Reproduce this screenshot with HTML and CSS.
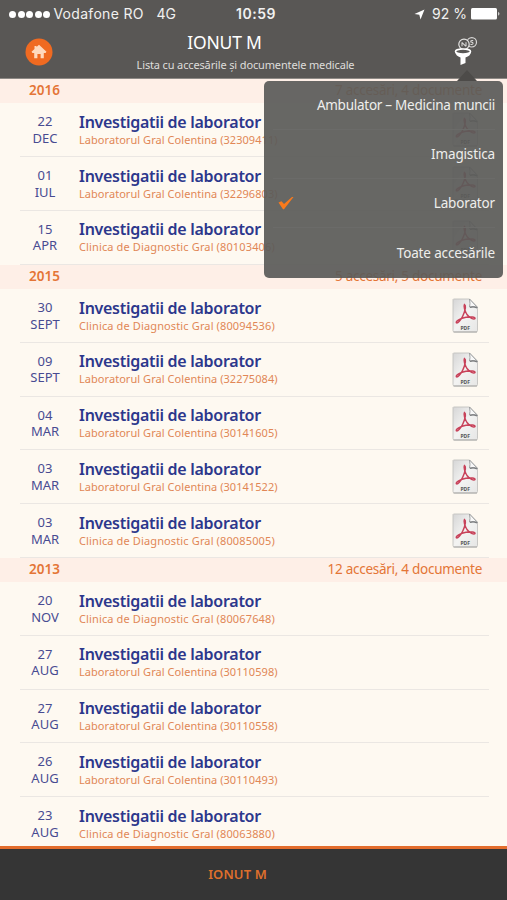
FILE: index.html
```html
<!DOCTYPE html>
<html lang="ro">
<head>
<meta charset="utf-8">
<title>IONUT M</title>
<link rel="stylesheet" href="styles.css">
</head>
<body>
<svg width="0" height="0" class="defs">
  <defs>
    <linearGradient id="paper" x1="0" y1="0" x2="1" y2="1"><stop offset="0" stop-color="#d6d6d6"/><stop offset=".5" stop-color="#f3f3f2"/><stop offset="1" stop-color="#e6e6e5"/></linearGradient>
    <symbol id="pdf" viewBox="0 0 27 35">
      <path d="M1.5 1H17.500L25.500 9V32.500Q25.500 34 24 34H2.500Q1 34 1 32.500V1.500Z" fill="url(#paper)" stroke="#c3c2c0" stroke-width=".9"/>
      <path d="M1.500 34H25" stroke="#aaa9a7" stroke-width="1"/>
      <path d="M17.500 1Q18.500 6 17.500 9Q22 8 25.500 9.500Z" fill="#f8f8f8" stroke="#96989a" stroke-width=".9"/>
      <path d="M18 9.300Q22 8.200 25 10" fill="none" stroke="#77797b" stroke-width="1.300"/>
      <path d="M12.500 6.500C14.600 8 12.800 13.500 10.800 18C9 22 5.500 25.800 4.400 24.800C3.600 23.500 8 20.300 14 19.300C19 18.500 23.500 19.200 23 20.500C22 21.800 17.500 20 15.200 16.800C13 13.500 11.300 8.500 12.500 6.500Z" fill="none" stroke="#c8425a" stroke-width="1.500"/>
      <text x="13.200" y="31.800" text-anchor="middle" class="pdf-label">PDF</text>
    </symbol>
  </defs>
</svg>
<div class="screen">
  <header class="top">
    <div class="status">
      <div class="carrier"><span class="dots"><i></i><i></i><i></i><i></i><i></i></span><span class="net">Vodafone RO</span><span class="gen">4G</span></div>
      <div class="time">10:59</div>
      <div class="power">
        <svg width="11" height="11" viewBox="0 0 11 11"><path d="M10.500 .5L6.500 10.500L5.300 5.700L.5 5Z" fill="#fff"/></svg>
        <span class="percent">92 %</span>
        <svg width="30" height="12" viewBox="0 0 30 12"><rect width="26" height="11.500" rx="1.500" fill="#fff"/><path d="M27.300 3.800Q29.500 5.800 27.300 7.800Z" fill="#fff"/></svg>
      </div>
    </div>
    <div class="nav">
      <svg class="home" width="28" height="28" viewBox="0 0 28 28"><circle cx="14" cy="14" r="13.500" fill="#f06a21"/><path d="M14 6.700L21.500 13.700L20.500 15H18.800V20.300H15.600V16H12.400V20.300H9.200V15H7.500L6.500 13.700L9.500 10.900V8H11.500V9Z" fill="#ffd9bd"/></svg>
      <div class="heading"><h1>IONUT M</h1><p>Lista cu accesările și documentele medicale</p></div>
      <svg class="funnel" width="26" height="31" viewBox="0 0 26 31"><circle cx="18.800" cy="6.300" r="4.700" fill="#595755" stroke="#d8d7d6" stroke-width="1.200"/><path d="M20.200 4.500Q17.200 4.100 17.900 6Q20.700 6.500 19.800 8Q18.900 9 17.500 8.200" fill="none" stroke="#d8d7d6" stroke-width="1.100"/><circle cx="11" cy="8.300" r="5.200" fill="#595755" stroke="#e5e4e3" stroke-width="1.200"/><path d="M8.800 6.400L13 10.300M13 6.300V10.300M9 6.300V10.300" stroke="#d8d7d6" stroke-width="1.100"/><ellipse cx="10" cy="15.500" rx="7.500" ry="2.500" fill="#595755" stroke="#fff" stroke-width="1.600"/><path d="M2 16Q10 20 18 16Q17.500 20 12.500 21.500V27L7.500 29V21.500Q3 20 2 16Z" fill="#fff"/></svg>
    </div>
  </header>
  <main class="list">
    <div class="year"><b>2016</b><span>7 accesări, 4 documente</span></div>
    <article class="visit"><div class="date">22<br>DEC</div><div class="info"><h2>Investigatii de laborator</h2><p>Laboratorul Gral Colentina (32309411)</p></div><svg class="doc"><use href="#pdf"/></svg></article>
    <article class="visit"><div class="date">01<br>IUL</div><div class="info"><h2>Investigatii de laborator</h2><p>Laboratorul Gral Colentina (32296803)</p></div><svg class="doc"><use href="#pdf"/></svg></article>
    <article class="visit"><div class="date">15<br>APR</div><div class="info"><h2>Investigatii de laborator</h2><p class="clinic">Clinica de Diagnostic Gral (80103406)</p></div><svg class="doc"><use href="#pdf"/></svg></article>
    <div class="year"><b>2015</b><span>5 accesări, 5 documente</span></div>
    <article class="visit"><div class="date">30<br>SEPT</div><div class="info"><h2>Investigatii de laborator</h2><p class="clinic">Clinica de Diagnostic Gral (80094536)</p></div><svg class="doc"><use href="#pdf"/></svg></article>
    <article class="visit"><div class="date">09<br>SEPT</div><div class="info"><h2>Investigatii de laborator</h2><p>Laboratorul Gral Colentina (32275084)</p></div><svg class="doc"><use href="#pdf"/></svg></article>
    <article class="visit"><div class="date">04<br>MAR</div><div class="info"><h2>Investigatii de laborator</h2><p>Laboratorul Gral Colentina (30141605)</p></div><svg class="doc"><use href="#pdf"/></svg></article>
    <article class="visit"><div class="date">03<br>MAR</div><div class="info"><h2>Investigatii de laborator</h2><p>Laboratorul Gral Colentina (30141522)</p></div><svg class="doc"><use href="#pdf"/></svg></article>
    <article class="visit"><div class="date">03<br>MAR</div><div class="info"><h2>Investigatii de laborator</h2><p class="clinic">Clinica de Diagnostic Gral (80085005)</p></div><svg class="doc"><use href="#pdf"/></svg></article>
    <div class="year"><b>2013</b><span>12 accesări, 4 documente</span></div>
    <article class="visit"><div class="date">20<br>NOV</div><div class="info"><h2>Investigatii de laborator</h2><p class="clinic">Clinica de Diagnostic Gral (80067648)</p></div></article>
    <article class="visit"><div class="date">27<br>AUG</div><div class="info"><h2>Investigatii de laborator</h2><p>Laboratorul Gral Colentina (30110598)</p></div></article>
    <article class="visit"><div class="date">27<br>AUG</div><div class="info"><h2>Investigatii de laborator</h2><p>Laboratorul Gral Colentina (30110558)</p></div></article>
    <article class="visit"><div class="date">26<br>AUG</div><div class="info"><h2>Investigatii de laborator</h2><p>Laboratorul Gral Colentina (30110493)</p></div></article>
    <article class="visit"><div class="date">23<br>AUG</div><div class="info"><h2>Investigatii de laborator</h2><p class="clinic">Clinica de Diagnostic Gral (80063880)</p></div></article>
  </main>
  <footer class="bottom">IONUT M</footer>
  <div class="menu">
    <div class="option"><span class="wide">Ambulator – Medicina muncii</span></div>
    <div class="option"><span>Imagistica</span></div>
    <div class="option"><svg width="16" height="14" viewBox="0 0 16 14"><path d="M.5 6.500L3.500 5.300L6 8L14 1H15.500L6 13.300L5 13.300Z" fill="#f97a1c"/></svg><span>Laborator</span></div>
    <div class="option"><span>Toate accesările</span></div>
  </div>
</div>
</body>
</html>
```
FILE: styles.css
```css
* { box-sizing: border-box; }
body { margin: 0; font-family: "Noto Sans", sans-serif; }
h1, h2, p { margin: 0; font-weight: 400; }
svg { display: block; flex: none; }
.defs { position: absolute; }
.screen { position: relative; width: 507px; height: 900px; overflow: hidden; display: flex; flex-direction: column; background: #fef9f1; }

.top { height: 79px; flex: none; background: #595755; color: #fff; border-bottom: 1px solid #8d8985; }
.status { display: grid; grid-template-columns: 1fr auto 1fr; align-items: center; height: 28px; padding: 0 6px 0 9px; font-family: Inter, sans-serif; font-size: 14px; line-height: 28px; color: #f1f1f0; }
.carrier, .power { display: flex; align-items: center; white-space: nowrap; }
.dots { display: flex; gap: 1.600px; margin-right: 3px; }
.dots i { width: 7px; height: 7px; border-radius: 50%; background: #fff; }
.net { width: 103px; letter-spacing: .3px; }
.time { font-weight: 600; letter-spacing: .5px; padding-left: 2px; }
.power { justify-content: flex-end; }
.percent { margin: 0 4px 0 7px; }
.nav { display: flex; align-items: flex-start; padding: 0 28px 0 25px; }
.home { margin-top: 10px; }
.heading { flex: 1; text-align: center; }
.heading h1 { font-size: 17.500px; line-height: 24px; letter-spacing: -.2px; margin: 2px 57px 0 0; }
.heading p { font-size: 11px; line-height: 16px; letter-spacing: -.14px; margin: 3px 15px 0 0; color: #dedddb; }
.funnel { margin-top: 8px; }

.list { flex: 1; min-height: 0; overflow: hidden; }
.year { height: 24.400px; display: flex; justify-content: space-between; padding: 0 25px 0 29px; background: #feefe7; color: #e47536; font-size: 13.500px; line-height: 22px; }
.year b { font-weight: 600; }
.year span { letter-spacing: -.27px; }
.visit { height: 53.750px; display: flex; margin: 0 18px 0 20px; border-bottom: 1px solid #ebe7e3; }
.date { width: 50px; padding-top: 10px; text-align: center; font-size: 13px; line-height: 16.500px; color: #484b91; }
.info { flex: 1; padding: 8.500px 0 0 9px; white-space: nowrap; }
.info h2 { font-size: 16px; line-height: 21px; letter-spacing: -.28px; font-weight: 600; color: #2c378c; }
.info p { font-size: 11px; line-height: 14px; letter-spacing: .05px; color: #e18756; }
.info .clinic { letter-spacing: .13px; }
.doc { width: 27px; height: 35px; margin: 9px 10px 0 0; }
.pdf-label { font-size: 5px; font-weight: 700; fill: #555; }

.bottom { height: 54px; flex: none; border-top: 3px solid #e36d2d; background: #353535; color: #df6f2c; font-size: 13px; font-weight: 600; line-height: 51px; letter-spacing: .1px; text-align: center; padding-right: 32px; }

.menu { position: absolute; left: 264px; top: 81px; width: 239px; height: 197px; border-radius: 5px; background: rgba(91, 91, 89, .93); color: #eeeeec; font-size: 13.500px; letter-spacing: -.15px; }
.menu::before { content: ""; position: absolute; left: 193px; top: -11px; border: 10px solid transparent; border-top: 0; border-bottom: 11px solid #4d4b49; }
.option { height: 49px; margin: 0 8px 0 9px; display: flex; align-items: center; line-height: 46px; border-bottom: 1px solid #6b6b69; }
.option:last-child { border-bottom: 0; }
.option span { margin-left: auto; }
.option .wide { letter-spacing: -.26px; }
.option svg { margin-left: 5px; }
```
